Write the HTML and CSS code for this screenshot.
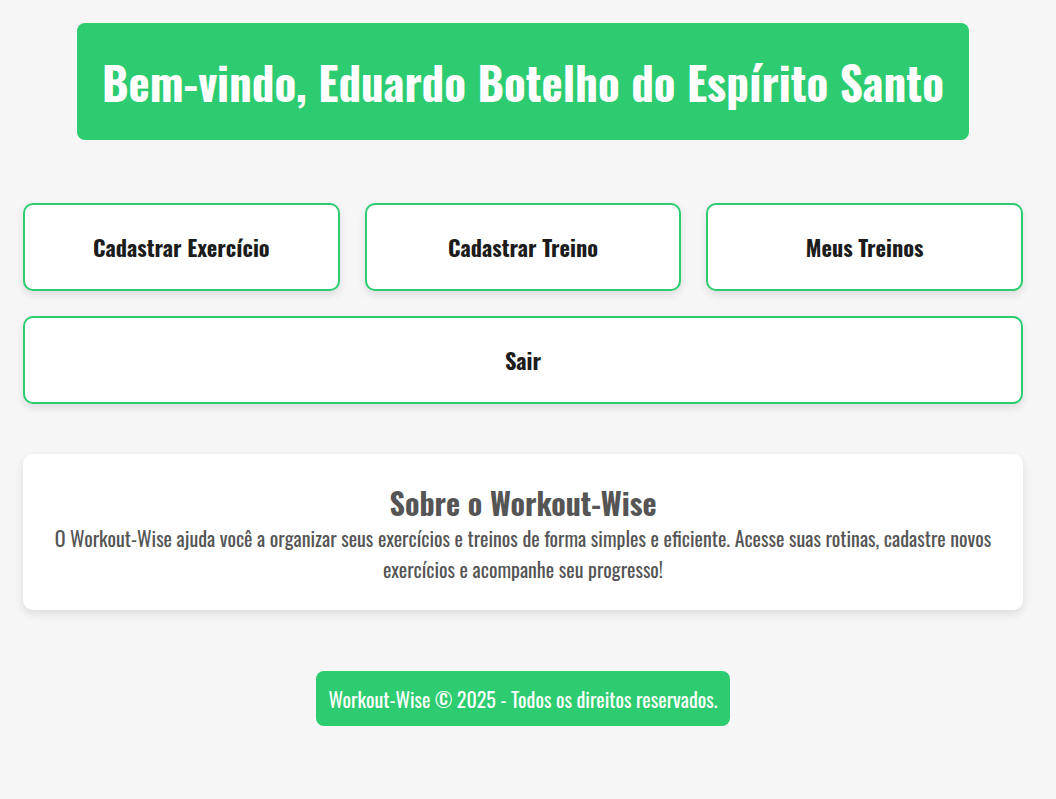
FILE: index.html
```html
<!DOCTYPE html>
<html lang="pt-BR">
<head>
<meta charset="utf-8">
<title>Workout-Wise</title>
<link rel="stylesheet" href="styles.css">
</head>
<body>
<div class="page">
  <header class="hero">
    <h1 class="hero-title">Bem-vindo, Eduardo Botelho do Espírito Santo</h1>
  </header>
  <nav class="actions">
    <a class="action" href="#">Cadastrar Exercício</a>
    <a class="action" href="#">Cadastrar Treino</a>
    <a class="action" href="#">Meus Treinos</a>
    <a class="action action-wide" href="#">Sair</a>
  </nav>
  <section class="about">
    <h2 class="about-title">Sobre o Workout-Wise</h2>
    <p class="about-text">O Workout-Wise ajuda você a organizar seus exercícios e treinos de forma simples e eficiente. Acesse suas rotinas, cadastre novos exercícios e acompanhe seu progresso!</p>
  </section>
  <footer class="footer">
    <p class="footer-text">Workout-Wise © 2025 - Todos os direitos reservados.</p>
  </footer>
</div>
</body>
</html>
```
FILE: styles.css
```css
html, body {
  margin: 0;
  padding: 0;
}
body {
  background: #f6f6f6;
  font-family: "Oswald", "Roboto Condensed", "Liberation Sans Narrow", "DejaVu Sans Condensed", "Liberation Sans", sans-serif;
}
.page {
  width: 1000px;
  margin-left: 23px;
  padding-top: 23px;
  display: flex;
  flex-direction: column;
  align-items: center;
}
.hero {
  background: #2ecc71;
  border-radius: 8px;
  width: 892px;
  height: 117px;
  display: flex;
  align-items: center;
  justify-content: center;
  box-sizing: border-box;
}
.hero-title {
  margin: 0;
  color: #fff;
  font-size: 45px;
  font-weight: 700;
  white-space: nowrap;
}
.actions {
  margin-top: 63px;
  width: 100%;
  display: grid;
  grid-template-columns: repeat(3, 1fr);
  gap: 25px;
}
.action {
  display: flex;
  align-items: center;
  justify-content: center;
  height: 88px;
  box-sizing: border-box;
  background: #fff;
  border: 2px solid #2ecc71;
  border-radius: 10px;
  box-shadow: 0 4px 8px rgba(0, 0, 0, 0.1);
  color: #1c1c1c;
  font-size: 22.3px;
  font-weight: 700;
  text-decoration: none;
  padding-bottom: 1px;
}
.action-wide {
  grid-column: 1 / -1;
}
.about {
  margin-top: 50px;
  width: 100%;
  box-sizing: border-box;
  background: #fff;
  border-radius: 10px;
  box-shadow: 0 4px 10px rgba(0, 0, 0, 0.1);
  padding: 29px 30px 25px;
  text-align: center;
  color: #555;
}
.about-title {
  margin: 0;
  font-size: 30px;
  font-weight: 700;
  line-height: 40px;
}
.about-text {
  margin: 0;
  font-size: 20px;
  font-weight: 400;
  line-height: 31px;
}
.footer {
  margin-top: 61px;
  background: #2ecc71;
  border-radius: 8px;
  width: 414px;
  height: 55px;
  display: flex;
  align-items: center;
  justify-content: center;
}
.footer-text {
  margin: 0;
  color: #fff;
  font-size: 20px;
  white-space: nowrap;
}
```
